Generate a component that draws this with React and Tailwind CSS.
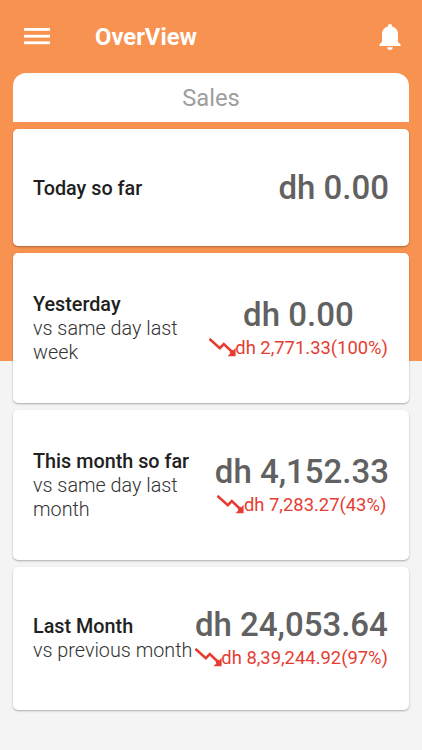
import React from 'react';

const stats = [
    {
        title: 'Today so far',
        amount: 'dh 0.00',
        size: 'h-[117px] pr-5',
        labelPad: 'pt-[2px]',
        align: 'items-end pt-px',
    },
    {
        title: 'Yesterday',
        compare: 'vs same day last week',
        amount: 'dh 0.00',
        change: 'dh 2,771.33(100%)',
        size: 'h-[150px] pr-[21px]',
        labelPad: 'pt-[2px]',
        align: 'items-center pb-[2px]',
    },
    {
        title: 'This month so far',
        compare: 'vs same day last month',
        amount: 'dh 4,152.33',
        change: 'dh 7,283.27(43%)',
        size: 'h-[150px] pr-5',
        labelPad: 'pt-[2px]',
        align: 'items-center pb-[2px]',
    },
    {
        title: 'Last Month',
        compare: 'vs previous month',
        amount: 'dh 24,053.64',
        change: 'dh 8,39,244.92(97%)',
        size: 'h-[143px] pr-[21px]',
        labelPad: 'pt-0',
        align: 'items-center pb-[2px]',
    },
];

function TrendDown() {
    return (
        <svg className="h-[20px] w-[27px] shrink-0" viewBox="0 0 27 20" fill="none">
            <path d="M.4 .8 L10.8 10.2 L14.8 6 L23.2 14" stroke="#e53d33" strokeWidth="2.6" />
            <path d="M26.6 9.8 V18.2 H18.6 L21.4 15.2 L20.6 14.2 L23 11.6 L24.2 12.4 Z" fill="#e53d33" />
        </svg>
    );
}

function StatCard({ title, compare, amount, change, size, labelPad, align }) {
    return (
        <div
            className={`flex items-center justify-between rounded-[5px] bg-white pl-5 shadow-[0_1px_2px_rgba(0,0,0,0.3)] ${size}`}
        >
            <div className={`w-[161px] shrink-0 text-[19.8px] leading-[24px] text-[#212121] ${labelPad}`}>
                <p className="whitespace-nowrap font-medium">{title}</p>
                {compare && <p className="font-light text-[#333333]">{compare}</p>}
            </div>

            <div className={`flex shrink-0 flex-col gap-px ${align}`}>
                <p className="whitespace-nowrap text-[33px] font-medium leading-[40px] text-[#616161]">{amount}</p>
                {change && (
                    <div className="flex items-center">
                        <TrendDown />
                        <span className="-ml-[0.5px] whitespace-nowrap text-[18.4px] leading-[24px] text-[#e53d33]">{change}</span>
                    </div>
                )}
            </div>
        </div>
    );
}

export default function App() {
    return (
        <div className="h-[750px] w-[422px] overflow-hidden bg-[linear-gradient(#f79250_361px,#f4f4f4_361px)] font-['Roboto',sans-serif]">
            {/* Header */}
            <header className="flex h-[73px] items-center pl-6 pr-[21px]">
                <svg className="h-[17px] w-[26px]" viewBox="0 0 26 17" fill="white">
                    <rect x="0" y="0" width="26" height="2.8" />
                    <rect x="0" y="6.8" width="26" height="2.8" />
                    <rect x="0" y="13.4" width="26" height="2.8" />
                </svg>
                <h1 className="ml-[45px] text-[23.8px] font-bold leading-[28px] text-white">OverView</h1>
                <svg className="ml-auto h-[26px] w-[22px]" viewBox="0 0 22 26" fill="white">
                    <path d="M11 0 C12.2 0 13 .8 13 1.8 V2.4 C16.6 3.3 19 6.2 19 10 V18 L21.6 20.4 V22 H.4 V20.4 L3 18 V10 C3 6.2 5.4 3.3 9 2.4 V1.8 C9 .8 9.8 0 11 0 Z" />
                    <path d="M8.2 23.2 H13.8 C13.6 25 12.5 26 11 26 C9.5 26 8.4 25 8.2 23.2 Z" />
                </svg>
            </header>

            <main className="flex flex-col gap-[7px] px-[13px]">
                <div className="flex h-[49px] items-center justify-center rounded-t-[13px] bg-white pt-[2px] text-[23.7px] text-[#9e9e9e]">
                    Sales
                </div>
                {stats.map((stat) => (
                    <StatCard key={stat.title} {...stat} />
                ))}
            </main>
        </div>
    );
}
